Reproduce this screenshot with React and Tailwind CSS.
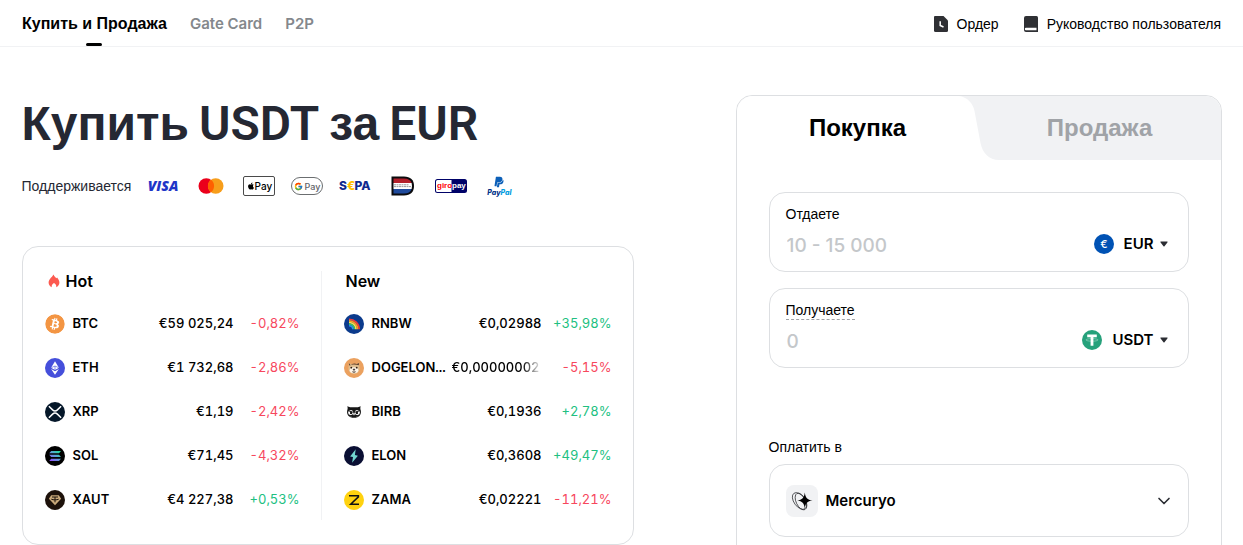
import { ChevronDown } from "lucide-react";
import { FaApple, FaBitcoin, FaPaypal } from "react-icons/fa";
import { FcGoogle } from "react-icons/fc";

function VisaLogo() {
  return (
    <svg viewBox="0 0 32 20" className="w-8 h-5" role="img" aria-label="Visa">
      <text x="16" y="15" textAnchor="middle" fontFamily="Open Sans, sans-serif" fontSize="14" fontWeight="800" fontStyle="italic" fill="#1f35c7">VISA</text>
    </svg>
  );
}

function MastercardLogo() {
  return (
    <svg viewBox="0 0 32 20" className="w-8 h-5" role="img" aria-label="Mastercard">
      <circle cx="11.3" cy="10" r="7.8" fill="#eb001b" />
      <circle cx="20.7" cy="10" r="7.8" fill="#f79e1b" />
      <path d="M16 3.8a7.8 7.8 0 0 1 0 12.4a7.8 7.8 0 0 1 0-12.4z" fill="#ff5f00" />
    </svg>
  );
}

function ApplePayLogo() {
  return (
    <span className="w-8 h-5 flex items-center justify-center rounded-xs border border-[#4a4a4a] text-black text-[10px] font-medium leading-none">
      <FaApple size={8} />
      Pay
    </span>
  );
}

function GooglePayLogo() {
  return (
    <span className="w-8 h-[18px] flex items-center justify-center gap-px rounded-full border border-[#6b6e70] text-[#5f6368] text-[9px] font-medium leading-none">
      <FcGoogle size={9} />
      Pay
    </span>
  );
}

function SepaLogo() {
  return (
    <svg viewBox="0 0 32 20" className="w-8 h-5" role="img" aria-label="SEPA">
      <g fontFamily="Inter, sans-serif" fontSize="12" fontWeight="800">
        <text x="0" y="14.4" fill="#10298e">S</text>
        <text x="8" y="14.4" fill="#ffbe00">€</text>
        <text x="15.6" y="14.4" fill="#10298e">PA</text>
      </g>
    </svg>
  );
}

function IdealLogo() {
  return (
    <svg viewBox="0 0 32 20" className="w-8 h-5" role="img" aria-label="Nederland">
      <path d="M4.500.5h12.500c6.500 0 10 3.500 10 9.500s-3.500 9.500-10 9.500h-12.500z" fill="#0b0b0d" />
      <path d="M6.500 2.500h10.500c4.200 0 6.600 1.500 7.600 4.500H6.500z" fill="#b3202c" />
      <path d="M6.500 7h18.100c.5 2 .5 4 0 6H6.500z" fill="#fff" />
      <path d="M6.500 13h18.100c-1 3-3.400 4.500-7.600 4.500H6.500z" fill="#1f4a9c" />
      <path d="M7 8.800h15M7 10.600h17" stroke="#8d8d92" strokeWidth=".9" strokeDasharray="2 .5" />
    </svg>
  );
}

function GiropayLogo() {
  return (
    <svg viewBox="0 0 32 20" className="w-8 h-5" role="img" aria-label="giropay">
      <rect x="0" y="3" width="32" height="14" rx="2.500" fill="#000268" />
      <path d="M2.500 4H16.500v12H2.500A1.500 1.500 0 0 1 1 14.500v-9A1.500 1.500 0 0 1 2.500 4z" fill="#fff" />
      <g fontFamily="Liberation Sans, sans-serif" fontSize="8" fontWeight="700">
        <text x="2" y="12.400" fill="#ff0007">giro</text>
        <text x="17" y="12.400" fill="#fff">pay</text>
      </g>
    </svg>
  );
}

function PaypalLogo() {
  return (
    <span className="w-8 h-5 flex flex-col items-center justify-between leading-none">
      <FaPaypal size={12} color="#0c5fb8" />
      <span className="text-[7px] leading-[7px] font-extrabold italic text-[#003087]">
        Pay<span className="text-[#009cde]">Pal</span>
      </span>
    </span>
  );
}

function CoinIcon({ name }) {
  const cls = "w-5 h-5 shrink-0";
  switch (name) {
    case "BTC":
      return <FaBitcoin className="w-5 h-5 shrink-0 rounded-full bg-white text-[#f39543]" />;
    case "ETH":
      return (
        <svg viewBox="0 0 20 20" className={cls}>
          <circle cx="10" cy="10" r="10" fill="#454fdb" />
          <path d="M10 3.300l3.900 6.400L10 12.100 6.100 9.700z" fill="#fff" />
          <path d="M6.100 10.900L10 13.300l3.900-2.400L10 16.700z" fill="#fff" />
          <path d="M6.400 9.600L10 8l3.600 1.600M10 8v4" stroke="#454fdb" strokeWidth=".6" fill="none" />
        </svg>
      );
    case "XRP":
      return (
        <svg viewBox="0 0 20 20" className={cls}>
          <circle cx="10" cy="10" r="10" fill="#051729" />
          <path d="M3.900 4.300l3.700 3.600c1.400 1.300 3.400 1.300 4.800 0l3.700-3.600M3.900 15.700l3.700-3.600c1.400-1.300 3.400-1.300 4.800 0l3.700 3.600" stroke="#fff" strokeWidth="1.500" fill="none" />
        </svg>
      );
    case "SOL":
      return (
        <svg viewBox="0 0 20 20" className={cls}>
          <defs>
            <linearGradient id="sol" x1="1" y1="0" x2="0" y2="1">
              <stop offset="0" stopColor="#14f195" />
              <stop offset=".5" stopColor="#5e9bd8" />
              <stop offset="1" stopColor="#9945ff" />
            </linearGradient>
          </defs>
          <circle cx="10" cy="10" r="10" fill="#000" />
          <path d="M6.200 4.900h9.800l-2 2.300H4.200zM4.200 8.800H14l2 2.300H6.200zM6.200 12.700h9.800l-2 2.300H4.200z" fill="url(#sol)" />
        </svg>
      );
    case "XAUT":
      return (
        <svg viewBox="0 0 20 20" className={cls}>
          <circle cx="10" cy="10" r="10" fill="#1d120b" />
          <path d="M6.200 5.300h7.600l2.300 3.500L10 15.300 3.900 8.800z" fill="#cbab7c" />
          <path d="M7 7h6M10 7v5.300M6.300 9.200c2 .9 5.400.9 7.400 0" stroke="#1d120b" strokeWidth="1" fill="none" />
        </svg>
      );
    case "RNBW":
      return (
        <svg viewBox="0 0 20 20" className={cls}>
          <circle cx="10" cy="10" r="10" fill="#0b3a8c" />
          <g fill="none" strokeWidth="1.600">
            <path d="M5 5.300c5.500 0 10.200 4.200 10.200 9.900" stroke="#ee3b3b" />
            <path d="M5 6.900c4.600 0 8.600 3.600 8.600 8.300" stroke="#ff9a1f" />
            <path d="M5 8.500c3.700 0 7 2.900 7 6.700" stroke="#ffe14a" />
            <path d="M5 10.100c2.900 0 5.400 2.200 5.400 5.100" stroke="#35c46a" />
            <path d="M5 11.700c2 0 3.800 1.500 3.800 3.500" stroke="#2b8cf0" />
          </g>
        </svg>
      );
    case "DOGELON...":
      return (
        <svg viewBox="0 0 20 20" className={cls}>
          <circle cx="10" cy="10" r="10" fill="#eba15f" />
          <path d="M5 4.800l2.500 1.400h5.200L15 4.600l.6 5.600c0 3.300-2.300 5.600-5.600 5.600s-5.600-2.300-5.600-5.600z" fill="#dfbd8f" />
          <path d="M4.900 5l1.800 2.300L8 5.900c1.600-.7 3.400-.7 4.900 0l2.200-.9-.3 2.300c-2.500-1.200-7-1.200-9.600.3z" fill="#5b3d2a" />
          <ellipse cx="10" cy="12.300" rx="4.300" ry="3" fill="#fff6ea" />
          <circle cx="7.300" cy="9.700" r=".9" fill="#2a1c14" />
          <circle cx="12.700" cy="9.700" r=".9" fill="#2a1c14" />
          <path d="M9 11.200h2l-1 1.300zM8.300 13.700c1 .7 2.400.7 3.400 0" stroke="#2a1c14" strokeWidth=".6" fill="#2a1c14" />
        </svg>
      );
    case "BIRB":
      return (
        <svg viewBox="0 0 20 20" className={cls}>
          <path d="M3.300 4.200c2 .9 3.300 1.100 6.700 1.100s4.700-.2 6.700-1.100c-.6 1.700-.4 3 .1 4.300.8 4-1.500 7.300-6.800 7.300S2.400 12.500 3.200 8.500c.5-1.300.7-2.600.1-4.300z" fill="#161616" />
          <circle cx="6.700" cy="10.600" r="2.500" fill="#fff" />
          <circle cx="13.300" cy="10.600" r="2.500" fill="#fff" />
          <path d="M4.200 8.500l4.600 1.700M15.800 8.500l-4.600 1.700" stroke="#161616" strokeWidth="1.200" />
          <circle cx="7.100" cy="10.900" r="1.200" fill="#161616" />
          <circle cx="12.900" cy="10.900" r="1.200" fill="#161616" />
          <path d="M9.200 11.500h1.600L10 13.200zM6.500 14.200l1 .7M13.500 14.200l-1 .7" fill="#fff" stroke="#fff" strokeWidth=".5" />
        </svg>
      );
    case "ELON":
      return (
        <svg viewBox="0 0 20 20" className={cls}>
          <circle cx="10" cy="10" r="10" fill="#0a0f33" />
          <path d="M11.700 3.200L6.100 10.500l2.900.6-.9 5.700 5.800-7-3-.8z" fill="#72d6d0" />
        </svg>
      );
    case "ZAMA":
      return (
        <svg viewBox="0 0 20 20" className={cls}>
          <circle cx="10" cy="10" r="10" fill="#ffd20f" />
          <path d="M5 5.700h9.400v1.200L6.700 14.200H15" stroke="#111" strokeWidth="1.500" fill="none" />
        </svg>
      );
    default:
      return null;
  }
}

const hotCoins = [
  { name: "BTC", price: "€59 025,24", change: "-0,82%" },
  { name: "ETH", price: "€1 732,68", change: "-2,86%" },
  { name: "XRP", price: "€1,19", change: "-2,42%" },
  { name: "SOL", price: "€71,45", change: "-4,32%" },
  { name: "XAUT", price: "€4 227,38", change: "+0,53%" },
];

const newCoins = [
  { name: "RNBW", price: "€0,02988", change: "+35,98%" },
  { name: "DOGELON...", price: "€0,00000002", change: "-5,15%", fade: true },
  { name: "BIRB", price: "€0,1936", change: "+2,78%" },
  { name: "ELON", price: "€0,3608", change: "+49,47%" },
  { name: "ZAMA", price: "€0,02221", change: "-11,21%" },
];

function CoinTable({ title, icon, coins, changeCol }) {
  return (
    <div className="pl-[22px] pr-[21px]">
      <h2 className="h-5 pl-0.5 flex items-center gap-[5px] text-base font-semibold text-black">
        {icon}
        {title}
      </h2>
      <table aria-label={title} className="mt-[11px] w-full table-fixed text-[13px] font-medium tabular-nums">
        <colgroup>
          <col />
          <col className="w-[90px]" />
          <col className={changeCol} />
        </colgroup>
        <tbody>
          {coins.map((coin) => (
            <tr key={coin.name} className="h-11">
              <td className="p-0">
                <div className="flex items-center gap-2 font-semibold text-black whitespace-nowrap">
                  <CoinIcon name={coin.name} />
                  {coin.name}
                </div>
              </td>
              <td className={coin.fade ? "p-0 text-left whitespace-nowrap text-black" : "p-0 text-right whitespace-nowrap text-black"}>
                <span className={coin.fade ? "block overflow-hidden [mask-image:linear-gradient(to_right,#000_70px,transparent_90px)]" : ""}>
                  {coin.price}
                </span>
              </td>
              <td className={coin.change.startsWith("-") ? "p-0 text-right font-normal text-[#f7475d]" : "p-0 text-right font-normal text-[#21bf81]"}>
                {coin.change}
              </td>
            </tr>
          ))}
        </tbody>
      </table>
    </div>
  );
}

function AmountField({ id, label, hint, placeholder, currency, icon }) {
  return (
    <div className="h-20 px-4 pt-[11px] rounded-2xl border border-[#dddfe2]">
      <div className="flex h-5 items-start">
        <label
          htmlFor={id}
          className={
            hint
              ? "h-5 font-['Liberation_Sans',sans-serif] text-sm leading-5 text-black border-b border-dashed border-[#a0a3a7]"
              : "h-5 font-['Liberation_Sans',sans-serif] text-sm leading-5 text-black"
          }
        >
          {label}
        </label>
      </div>
      <div className="mt-1 flex h-8 items-center">
        <input id={id} type="text" placeholder={placeholder} className="min-w-0 flex-1 pl-px pt-1 text-[19px] font-medium text-black placeholder:text-[#c4c7ca] outline-none" />
        <div className="relative flex items-center gap-2.5 pr-1">
          {icon}
          <select aria-label={currency} className="field-sizing-content appearance-none bg-transparent pr-3.5 text-[15px] font-semibold text-black outline-none">
            <option>{currency}</option>
          </select>
          <svg viewBox="0 0 8 6" className="pointer-events-none absolute right-1 w-2 h-1.5">
            <path d="M1 .5h6c.6 0 .8.500.4.900L4.500 5.200c-.3.400-.7.400-1 0L.6 1.400C.2 1 .4.500 1 .5z" fill="#2b2d33" />
          </svg>
        </div>
      </div>
    </div>
  );
}

export default function App() {
  return (
    <div className="min-h-screen bg-white font-['Inter','Liberation_Sans',sans-serif]">
      <header className="flex h-[47px] items-center justify-between border-b border-[#f1f2f4] px-[22px]">
        <nav className="flex h-full items-center gap-[23px] text-base">
          <a href="#trade" className="relative flex h-full items-center pt-0.5 font-['Liberation_Sans',sans-serif] font-bold text-black">
            Купить и Продажа
            <span className="absolute bottom-0 left-1/2 h-[3px] w-4 -translate-x-1/2 rounded-sm bg-black" />
          </a>
          <a href="#card" className="pt-0.5 text-[15px] font-semibold text-[#84888c]">Gate Card</a>
          <a href="#p2p" className="pt-0.5 text-[15px] font-semibold text-[#84888c]">P2P</a>
        </nav>
        <div className="flex items-center gap-6 pt-0.5 font-['Liberation_Sans',sans-serif] text-sm text-black">
          <a href="#orders" className="flex items-center gap-2">
            <svg viewBox="0 0 16 16" className="w-4 h-4">
              <path d="M2 0h8.500L15 4.500V14.500A1.500 1.500 0 0 1 13.500 16h-11A1.500 1.500 0 0 1 1 14.500V1A1 1 0 0 1 2 0z" fill="#2f3034" />
              <path d="M7.200 5.200v4.300l3.300 1.500" stroke="#fff" strokeWidth="1.500" fill="none" />
            </svg>
            Ордер
          </a>
          <a href="#guide" className="flex items-center gap-2">
            <svg viewBox="0 0 16 16" className="w-4 h-4">
              <path d="M3 0h10.500a1.500 1.500 0 0 1 1.500 1.500V16H3a2 2 0 0 1-2-2V2a2 2 0 0 1 2-2z" fill="#2f3034" />
              <path d="M3 11.800h10.500v2.400H3a1.200 1.200 0 0 1 0-2.400z" fill="#fff" />
            </svg>
            Руководство пользователя
          </a>
        </div>
      </header>

      <main className="mx-auto grid max-w-[1200px] grid-cols-[minmax(0,1fr)_486px] gap-[102px] pt-12">
        <section>
          <h1 className="flex items-baseline gap-2.5 font-['Liberation_Sans',sans-serif] text-5xl leading-[58px] font-bold text-[#252833] whitespace-nowrap">
            <span>Купить</span>
            <span className="font-['Roboto',sans-serif] font-semibold">USDT</span>
            <span>за</span>
            <span className="font-['Roboto',sans-serif] font-semibold">EUR</span>
          </h1>
          <div className="mt-[22px] flex h-[22px] items-center gap-4">
            <span className="font-['Liberation_Sans',sans-serif] text-sm text-[#252833]">Поддерживается</span>
            <VisaLogo />
            <MastercardLogo />
            <ApplePayLogo />
            <GooglePayLogo />
            <SepaLogo />
            <IdealLogo />
            <GiropayLogo />
            <PaypalLogo />
          </div>

          <div className="mt-[49px] grid grid-cols-[minmax(0,1fr)_1px_311px] rounded-2xl border border-[#dddfe2] pt-6 pb-[22px]">
            <CoinTable
              title="Hot"
              coins={hotCoins}
              changeCol="w-[66px]"
              icon={
                <svg viewBox="0 0 14 14" className="w-3.5 h-3.5">
                  <path d="M6.700.6c.3 1.800 1.500 2.500 2.500 3.700l.9-.9c1.300 1.700 2.300 3.300 2.300 5.200 0 2.100-1.100 3.900-3.300 4.600.6-1.400.1-2.700-2.100-4.200-2.200 1.500-2.700 2.800-2.100 4.200C2.700 12.500 1.600 10.700 1.600 8.600c0-3 2.900-4.900 5.100-8z" fill="#fc5a50" />
                </svg>
              }
            />
            <div className="mb-0.5 bg-[#f1f2f4]" />
            <CoinTable title="New" coins={newCoins} changeCol="w-[70px]" />
          </div>
        </section>

        <section className="rounded-2xl border border-[#dddfe2] pb-8">
          <div className="grid h-16 grid-cols-2 overflow-hidden rounded-tr-2xl rounded-tl-2xl bg-[#f1f2f4] font-['Liberation_Sans',sans-serif] text-2xl font-bold">
            <button type="button" className="relative bg-white text-black">
              Покупка
              <svg viewBox="0 0 40 64" className="absolute top-0 -right-5 h-16 w-10">
                <path d="M0 0h40v64H0z" fill="#f1f2f4" />
                <path d="M0 0c8 1 14 7 15.500 15l6 32C23.500 57 30 64 40 64H0z" fill="#fff" />
              </svg>
            </button>
            <button type="button" className="text-[#a0a3a7]">Продажа</button>
          </div>

          <div className="flex flex-col gap-4 px-8 pt-8">
            <AmountField
              id="give"
              label="Отдаете"
              placeholder="10 - 15 000"
              currency="EUR"
              icon={
                <svg viewBox="0 0 20 20" className="w-5 h-5">
                  <circle cx="10" cy="10" r="10" fill="#0052b4" />
                  <text x="10" y="14" textAnchor="middle" fontFamily="Inter, sans-serif" fontSize="11" fontWeight="500" fill="#fff">€</text>
                </svg>
              }
            />
            <AmountField
              id="get"
              label="Получаете"
              hint
              placeholder="0"
              currency="USDT"
              icon={
                <svg viewBox="0 0 20 20" className="w-5 h-5">
                  <circle cx="10" cy="10" r="10" fill="#26a17b" />
                  <path d="M5.200 4.600h9.600v2.600h-3.400v8.600H8.600V7.200H5.200z" fill="#fff" />
                  <ellipse cx="10" cy="9.900" rx="6" ry="1.300" fill="none" stroke="#fff" strokeWidth=".5" strokeOpacity=".7" />
                </svg>
              }
            />
          </div>

          <div className="mt-[69px] px-8">
            <span className="block font-['Liberation_Sans',sans-serif] text-sm leading-5 text-black">Оплатить в</span>
            <button type="button" aria-label="Mercuryo" className="mt-[7px] flex h-[73px] w-full items-center gap-2 rounded-2xl border border-[#dddfe2] pl-4 pr-3.5 text-left">
              <span className="flex h-8 w-8 items-center justify-center rounded-lg bg-[#f1f2f4]">
                <svg viewBox="0 0 32 32" className="w-8 h-8">
                  <g fill="none" stroke="#26282c" strokeWidth=".7">
                    <ellipse cx="13.500" cy="16" rx="5.500" ry="9.500" transform="rotate(-36 13.500 16)" />
                    <ellipse cx="15" cy="16.500" rx="4.800" ry="9" transform="rotate(-26 15 16.500)" />
                  </g>
                  <path d="M18.800 7.500c.8 5.600 2.300 7.200 7.700 8-5.400.8-6.900 2.400-7.700 8-.8-5.600-2.300-7.200-7.700-8 5.400-.8 6.900-2.400 7.700-8z" fill="#000" />
                </svg>
              </span>
              <span className="flex-1 pt-px text-[15px] font-semibold text-black">Mercuryo</span>
              <ChevronDown size={20} className="text-[#2b2d33]" />
            </button>
          </div>
        </section>
      </main>
    </div>
  );
}
